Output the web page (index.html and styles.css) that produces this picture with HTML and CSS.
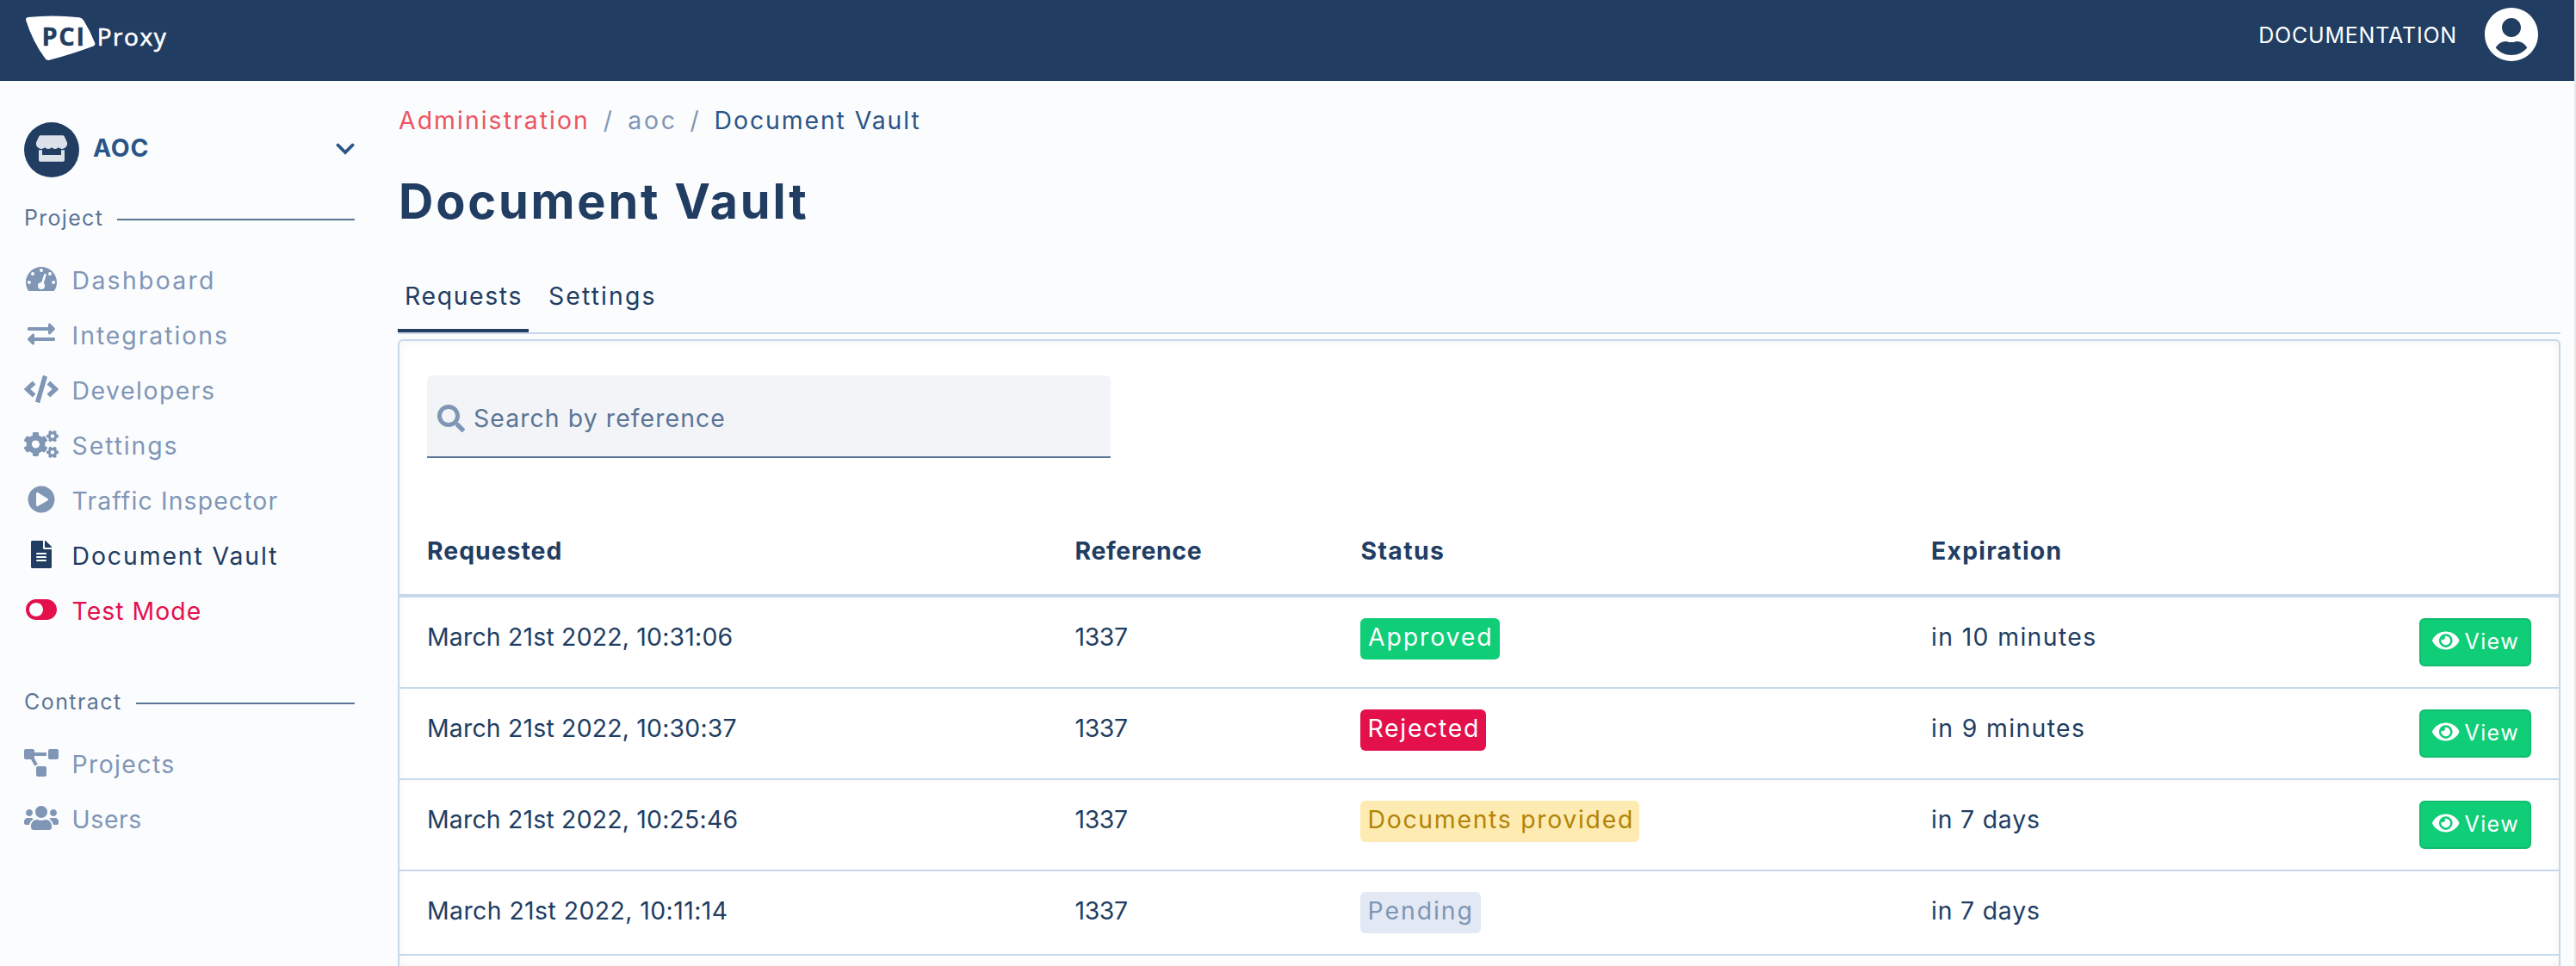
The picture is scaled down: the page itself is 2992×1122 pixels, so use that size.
FILE: index.html
```html
<!DOCTYPE html>
<html lang="en">
<head>
<meta charset="utf-8">
<title>Document Vault</title>
<link rel="stylesheet" href="styles.css">
</head>
<body>
<svg class="defs" width="0" height="0">
  <symbol id="eye" viewBox="0 0 576 512"><path d="M572.52 241.4C518.29 135.59 410.93 64 288 64S57.68 135.64 3.48 241.41a32.35 32.35 0 0 0 0 29.19C57.71 376.41 165.07 448 288 448s230.32-71.64 284.52-177.41a32.35 32.35 0 0 0 0-29.19zM288 400a144 144 0 1 1 144-144 143.93 143.93 0 0 1-144 144zm0-240a95.31 95.31 0 0 0-25.31 3.79 47.85 47.85 0 0 1-66.9 66.9A95.78 95.78 0 1 0 288 160z"/></symbol>
</svg>
<div class="app">
  <header class="topbar">
    <svg class="logo" width="200" height="94" viewBox="0 0 200 94">
      <path fill="#fff" d="M32.500 20 Q61 16.800 92 20.200 Q95 20.600 97 23.500 Q105 36 110.300 50 Q111 52.500 108 53.700 Q86 62 57.500 69.800 Q54.500 70.600 52.500 68 Q38 48.500 30.300 24 Q29.300 20.600 32.500 20Z"/>
      <text class="logo-pci" x="48.500" y="53">PCI</text>
      <text class="logo-proxy" x="112.700" y="53">Proxy</text>
    </svg>
    <div class="topbar-right">
      <a class="docs">DOCUMENTATION</a>
      <svg class="avatar" width="62" height="62" viewBox="0 8 496 496"><path fill="#fff" d="M248 8C111 8 0 119 0 256s111 248 248 248 248-111 248-248S385 8 248 8zm0 96c48.600 0 88 39.400 88 88s-39.400 88-88 88-88-39.400-88-88 39.400-88 88-88zm0 344c-58.700 0-111.300-26.600-146.500-68.200 18.800-35.400 55.600-59.800 98.500-59.800 2.400 0 4.800.4 7.100 1.100 13 4.200 26.600 6.900 40.900 6.900 14.300 0 28-2.700 40.900-6.900 2.300-.7 4.700-1.100 7.100-1.100 42.900 0 79.700 24.400 98.500 59.800C359.300 421.400 306.700 448 248 448z"/></svg>
    </div>
  </header>
  <div class="body">
    <aside class="sidebar">
      <div class="project">
        <svg width="64" height="64" viewBox="0 0 64 64">
          <circle cx="32" cy="32" r="32" fill="#213d62"/>
          <g fill="#dde1ea">
            <path d="M19 15.300H45Q46 15.300 46.600 16.300L49.600 22.500Q51 26 48.700 28.800Q46.500 31.200 43.500 30.900Q41.200 30.700 40 29.300Q38.300 30.900 36 30.900Q33.500 30.900 32 29.300Q30.500 30.900 28 30.900Q25.700 30.900 24 29.300Q22.800 30.700 20.500 30.900Q17.500 31.200 15.300 28.800Q13 26 14.400 22.500L17.400 16.300Q18 15.300 19 15.300Z"/>
            <path d="M17 32.300H21V38H43V32.300H47V44Q47 45.800 45.200 45.800H18.800Q17 45.800 17 44Z"/>
          </g>
        </svg>
        <span class="project-name">AOC</span>
        <svg class="chevron" width="22" height="16" viewBox="0 0 22 16"><path d="M2.500 3.500 11 12 19.500 3.500" fill="none" stroke="#2a5587" stroke-width="3.800" stroke-linecap="round"/></svg>
      </div>

      <div class="section"><span class="t-project">Project</span><i></i></div>
      <nav class="nav">
        <a class="t-dashboard"><svg viewBox="0 0 640 512"><g transform="translate(32 0)"><path d="M288 32C128.940 32 0 160.940 0 320c0 52.800 14.250 102.260 39.060 144.800 5.610 9.620 16.300 15.200 27.440 15.200h443c11.140 0 21.830-5.580 27.440-15.200C561.750 422.260 576 372.800 576 320c0-159.060-128.940-288-288-288z"/><g class="cut"><circle cx="288" cy="94" r="32"/><circle cx="128" cy="160" r="32"/><circle cx="448" cy="160" r="32"/><circle cx="62" cy="320" r="32"/><circle cx="514" cy="320" r="32"/><circle cx="288" cy="384" r="64"/></g><path class="needle" d="M357 182 298 370"/></g></svg>Dashboard</a>
        <a class="t-integrations"><svg viewBox="-64 0 640 512"><path d="M0 168v-16c0-13.255 10.745-24 24-24h360V80c0-21.367 25.899-32.042 40.971-16.971l80 80c9.372 9.373 9.372 24.569 0 33.941l-80 80C409.956 271.982 384 261.456 384 240v-48H24c-13.255 0-24-10.745-24-24zm488 152H128v-48c0-21.314-25.862-32.080-40.971-16.971l-80 80c-9.372 9.373-9.372 24.569 0 33.941l80 80C102.057 463.997 128 453.437 128 432v-48h360c13.255 0 24-10.745 24-24v-16c0-13.255-10.745-24-24-24z"/></svg>Integrations</a>
        <a class="t-developers"><svg viewBox="0 0 640 512"><path d="M278.900 511.500l-61-17.700c-6.400-1.800-10-8.500-8.200-14.900L346.200 8.700c1.800-6.400 8.500-10 14.900-8.200l61 17.700c6.400 1.800 10 8.500 8.200 14.900L293.800 503.300c-1.900 6.400-8.500 10.100-14.900 8.200zm-114-112.200l43.500-46.400c4.600-4.900 4.300-12.700-.8-17.200L117 256l90.600-79.700c5.100-4.500 5.500-12.300.8-17.200l-43.500-46.400c-4.500-4.800-12.100-5.100-17-.5L3.800 247.200c-5.100 4.700-5.100 12.800 0 17.500l144.100 135.100c4.900 4.600 12.500 4.400 17-.5zm327.200.6l144.100-135.100c5.100-4.700 5.100-12.800 0-17.500L492.100 112.100c-4.800-4.500-12.400-4.300-17 .5L431.600 159c-4.600 4.900-4.300 12.700.8 17.200L523 256l-90.600 79.700c-5.100 4.500-5.500 12.300-.8 17.200l43.500 46.400c4.500 4.900 12.100 5.100 17 .6z"/></svg>Developers</a>
        <a class="t-settings"><svg viewBox="0 0 640 512"><path id="gear" d="M512.100 191l-8.200 14.300c-3 5.300-9.400 7.500-15.100 5.400-11.800-4.400-22.600-10.700-32.100-18.600-4.600-3.800-5.800-10.500-2.800-15.700l8.200-14.300c-6.900-8-12.300-17.300-15.900-27.400h-16.500c-6 0-11.200-4.300-12.200-10.300-2-12-2.100-24.600 0-37.100 1-6 6.200-10.400 12.200-10.400h16.500c3.600-10.100 9-19.400 15.900-27.400l-8.200-14.300c-3-5.200-1.900-11.900 2.800-15.700 9.500-7.900 20.400-14.200 32.100-18.600 5.700-2.100 12.100.1 15.100 5.400l8.200 14.300c10.500-1.900 21.200-1.900 31.700 0L552 6.300c3-5.300 9.400-7.500 15.100-5.400 11.800 4.400 22.600 10.700 32.100 18.600 4.600 3.800 5.800 10.500 2.800 15.700l-8.200 14.300c6.900 8 12.300 17.300 15.900 27.400h16.500c6 0 11.200 4.300 12.200 10.300 2 12 2.100 24.600 0 37.100-1 6-6.200 10.400-12.200 10.400h-16.500c-3.600 10.100-9 19.400-15.900 27.400l8.200 14.300c3 5.200 1.900 11.900-2.800 15.700-9.500 7.900-20.400 14.200-32.100 18.600-5.700 2.100-12.100-.1-15.100-5.400l-8.200-14.300c-10.400 1.900-21.200 1.900-31.700 0zm-10.500-58.800c38.500 29.600 82.400-14.300 52.800-52.800-38.500-29.700-82.400 14.300-52.800 52.800z"/><use href="#gear" y="299"/><path d="M386.300 286.100l33.700 16.800c10.100 5.800 14.500 18.100 10.500 29.100-8.900 24.200-26.400 46.400-42.600 65.800-7.400 8.900-20.200 11.100-30.300 5.300l-29.100-16.800c-16 13.700-34.600 24.600-54.900 31.700v33.600c0 11.600-8.300 21.600-19.700 23.600-24.600 4.200-50.400 4.400-75.900 0-11.500-2-20-11.900-20-23.600V418c-20.300-7.200-38.900-18-54.900-31.700L74 403c-10 5.800-22.900 3.600-30.300-5.300-16.200-19.400-33.300-41.600-42.200-65.700-4-10.900.4-23.200 10.500-29.100l33.300-16.800c-3.900-20.900-3.900-42.400 0-63.400L12 205.800c-10.100-5.800-14.600-18.100-10.500-29 8.900-24.200 26-46.400 42.200-65.800 7.400-8.900 20.200-11.100 30.300-5.300l29.100 16.800c16-13.700 34.600-24.600 54.900-31.700V57.100c0-11.500 8.200-21.500 19.600-23.500 24.600-4.200 50.500-4.400 76-.1 11.500 2 20 11.900 20 23.600v33.600c20.300 7.200 38.900 18 54.900 31.700l29.100-16.800c10-5.800 22.900-3.600 30.300 5.300 16.200 19.400 33.200 41.600 42.100 65.800 4 10.900.1 23.200-10 29.100l-33.700 16.800c3.900 21 3.900 42.500 0 63.500zm-117.600 21.100c59.200-77-28.700-164.900-105.700-105.700-59.200 77 28.700 164.900 105.700 105.700z"/></svg>Settings</a>
        <a class="t-traffic"><svg viewBox="-64 0 640 512"><path d="M256 8C119 8 8 119 8 256s111 248 248 248 248-111 248-248S393 8 256 8zm115.700 272l-176 101c-15.800 8.800-35.700-2.500-35.700-21V152c0-18.400 19.800-29.800 35.700-21l176 107c16.400 9.200 16.400 32.900 0 42z"/></svg>Traffic Inspector</a>
        <a class="t-vault active"><svg viewBox="-128 0 640 512"><path d="M224 136V0H24C10.700 0 0 10.700 0 24v464c0 13.300 10.700 24 24 24h336c13.300 0 24-10.700 24-24V160H248c-13.200 0-24-10.800-24-24zm64 236c0 6.600-5.400 12-12 12H108c-6.600 0-12-5.400-12-12v-8c0-6.600 5.400-12 12-12h168c6.600 0 12 5.400 12 12v8zm0-64c0 6.600-5.400 12-12 12H108c-6.600 0-12-5.400-12-12v-8c0-6.600 5.400-12 12-12h168c6.600 0 12 5.400 12 12v8zm0-72v8c0 6.600-5.400 12-12 12H108c-6.600 0-12-5.400-12-12v-8c0-6.600 5.400-12 12-12h168c6.600 0 12 5.400 12 12zm96-114.100v6.100H256V0h6.100c6.400 0 12.500 2.500 17 7l97.900 98c4.500 4.500 7 10.600 7 16.900z"/></svg>Document Vault</a>
        <a class="t-test danger"><svg viewBox="-32 0 640 512"><path d="M384 64H192C85.961 64 0 149.961 0 256s85.961 192 192 192h192c106.039 0 192-85.961 192-192S490.039 64 384 64zM192 384c-70.741 0-128-57.249-128-128s57.249-128 128-128 128 57.249 128 128-57.249 128-128 128z"/></svg>Test Mode</a>
      </nav>

      <div class="section section-contract"><span class="t-contract">Contract</span><i></i></div>
      <nav class="nav">
        <a class="t-projects"><svg viewBox="0 0 640 512"><path d="M384 320H256c-17.670 0-32 14.330-32 32v128c0 17.670 14.330 32 32 32h128c17.670 0 32-14.330 32-32V352c0-17.670-14.330-32-32-32zM192 32c0-17.670-14.330-32-32-32H32C14.330 0 0 14.330 0 32v128c0 17.670 14.330 32 32 32h95.720l73.160 128.040C211.980 300.980 232.400 288 256 288h.280L192 175.510V128h224V64H192V32zM608 0H480c-17.670 0-32 14.330-32 32v128c0 17.670 14.330 32 32 32h128c17.670 0 32-14.330 32-32V32c0-17.670-14.330-32-32-32z"/></svg>Projects</a>
        <a class="t-users"><svg viewBox="0 0 640 512"><path d="M96 224c35.300 0 64-28.700 64-64s-28.700-64-64-64-64 28.700-64 64 28.700 64 64 64zm448 0c35.300 0 64-28.700 64-64s-28.700-64-64-64-64 28.700-64 64 28.700 64 64 64zm32 32h-64c-17.600 0-33.500 7.100-45.100 18.600 40.300 22.100 68.900 62 75.100 109.400h66c17.700 0 32-14.300 32-32v-32c0-35.300-28.700-64-64-64zm-256 0c61.900 0 112-50.100 112-112S381.900 32 320 32 208 82.100 208 144s50.100 112 112 112zm76.800 32h-8.300c-20.800 10-43.900 16-68.500 16s-47.600-6-68.500-16h-8.300C179.600 288 128 339.600 128 403.200V432c0 26.500 21.500 48 48 48h288c26.500 0 48-21.500 48-48v-28.800c0-63.600-51.600-115.200-115.200-115.200zm-223.700-13.400C161.500 263.100 145.600 256 128 256H64c-35.300 0-64 28.700-64 64v32c0 17.700 14.300 32 32 32h65.900c6.300-47.400 34.900-87.300 75.200-109.400z"/></svg>Users</a>
      </nav>
    </aside>

    <main class="main">
      <div class="crumbs"><a class="crumb-admin">Administration</a><span class="sep">/</span><span class="crumb-aoc">aoc</span><span class="sep">/</span><span class="crumb-page">Document Vault</span></div>
      <h1>Document Vault</h1>
      <div class="tabs"><a class="tab tab-requests active">Requests</a><a class="tab tab-settings">Settings</a></div>
      <section class="panel">
        <div class="search">
          <svg width="32" height="32" viewBox="0 0 512 512"><path d="M505 442.700L405.300 343c-4.500-4.500-10.600-7-17-7H372c27.600-35.300 44-79.700 44-128C416 93.100 322.900 0 208 0S0 93.100 0 208s93.100 208 208 208c48.300 0 92.700-16.400 128-44v16.300c0 6.400 2.500 12.500 7 17l99.700 99.700c9.400 9.400 24.600 9.400 33.900 0l28.300-28.300c9.400-9.400 9.400-24.600.1-34zM208 336c-70.700 0-128-57.200-128-128 0-70.700 57.200-128 128-128 70.700 0 128 57.200 128 128 0 70.700-57.200 128-128 128z"/></svg>
          <span>Search by reference</span>
        </div>
        <div class="row head"><span class="h-requested">Requested</span><span class="h-reference">Reference</span><span class="h-status">Status</span><span class="h-expiration">Expiration</span></div>
        <div class="row"><span class="date">March 21st 2022, 10:31:06</span><span class="ref">1337</span><span><b class="badge approved">Approved</b></span><span class="exp">in 10 minutes</span><a class="view"><svg><use href="#eye"/></svg>View</a></div>
        <div class="row"><span class="date">March 21st 2022, 10:30:37</span><span class="ref">1337</span><span><b class="badge rejected">Rejected</b></span><span class="exp">in 9 minutes</span><a class="view"><svg><use href="#eye"/></svg>View</a></div>
        <div class="row"><span class="date">March 21st 2022, 10:25:46</span><span class="ref">1337</span><span><b class="badge provided">Documents provided</b></span><span class="exp exp-days">in 7 days</span><a class="view"><svg><use href="#eye"/></svg>View</a></div>
        <div class="row"><span class="date date-narrow">March 21st 2022, 10:11:14</span><span class="ref">1337</span><span><b class="badge pending">Pending</b></span><span class="exp exp-days">in 7 days</span></div>
      </section>
    </main>
  </div>
</div>
</body>
</html>
```
FILE: styles.css
```css
* { box-sizing: border-box; }
body {
  margin: 0;
  background: #fbfcfe;
  color: #213d62;
  font: 28.4px/32px Inter, "Liberation Sans", sans-serif;
  white-space: nowrap;
}
.defs { display: block; }
.app {
  height: 1122px;
  overflow: hidden;
  display: flex;
  flex-direction: column;
  border-right: 2px solid #e8e8e8;
}

/* Top bar */
.topbar {
  height: 94px;
  flex: none;
  display: flex;
  justify-content: space-between;
  background: #213d62;
  color: #fff;
}
.logo { display: block; font-family: "Open Sans", "Noto Sans", sans-serif; }
.logo-pci { font-size: 29px; font-weight: 700; fill: #213d62; letter-spacing: 1.6px; stroke: #213d62; stroke-width: .4px; }
.logo-proxy { font-size: 28px; fill: #fff; letter-spacing: 1.55px; stroke: #fff; stroke-width: .6px; }
.topbar-right { display: flex; height: 80px; align-items: center; padding-right: 42px; }
.docs { font-size: 25px; letter-spacing: .8px; padding-top: 2px; margin-right: 32px; }

.body { flex: 1; min-height: 0; display: flex; }

/* Sidebar */
.sidebar { width: 462px; flex: none; padding: 48px 50px 0 28px; }
.project { display: flex; align-items: center; height: 64px; }
.project-name {
  margin: 0 auto 5px 16px;
  font-weight: 700;
  letter-spacing: .8px;
  color: #2a5587;
}
.chevron { margin-right: 0; margin-bottom: 3px; }
.section {
  display: flex;
  align-items: center;
  gap: 16px;
  height: 40px;
  margin: 29px 0 17px;
  color: #5b7595;
  font-size: 25px;
}
.section span { padding-bottom: 4px; }
.section i { flex: 1; height: 2px; background: #5b7595; }
.section-contract { margin-top: 57px; }
.nav a {
  display: flex;
  align-items: center;
  height: 64px;
  color: #8096b5;
  line-height: 60px;
  padding-top: 3px;
}
.nav svg { width: 40px; height: 32px; margin: -3px 15.6px 0 0; fill: currentColor; flex: none; }
.nav a.active { color: #213d62; }
.nav a.danger { color: #e3104c; }
.nav .cut { fill: #fbfcfe; }
.nav .needle { stroke: #fbfcfe; stroke-width: 42px; stroke-linecap: round; fill: none; }
.t-project { letter-spacing: 1.3px; }
.t-contract { letter-spacing: 1.45px; }
.t-dashboard { letter-spacing: 2.3px; }
.t-integrations { letter-spacing: 1.95px; }
.t-developers { letter-spacing: 1.5px; }
.t-settings { letter-spacing: 1.89px; }
.t-traffic { letter-spacing: 1.12px; }
.t-vault { letter-spacing: 1.88px; }
.t-test { letter-spacing: 1.02px; }
.t-projects { letter-spacing: 1.38px; }
.t-users { letter-spacing: .6px; }

/* Main column */
.main { flex: 1; padding: 26px 16px 0 0; display: flex; flex-direction: column; }
.crumbs { display: flex; height: 40px; line-height: 40px; color: #8096b5; }
.crumb-admin { padding-left: 1px; color: #eb5561; letter-spacing: 2.04px; }
.crumb-aoc { letter-spacing: 2.7px; }
.crumb-page { color: #2a5587; letter-spacing: 1.9px; }
.sep { width: 11px; margin: 0 17.5px 0 16px; }
.crumb-aoc + .sep { margin: 0 17px 0 15px; }
h1 {
  margin: 39px 0 37px;
  height: 70px;
  padding-left: 1px;
  font-size: 55.9px;
  line-height: 70px;
  font-weight: 700;
  letter-spacing: 2.8px;
}
.tabs { display: flex; height: 82px; flex: none; border-bottom: 2px solid #c7d8eb; }
.tab { height: 80px; line-height: 76px; padding: 0 8px; border-bottom: 4px solid transparent; }
.tab-requests { width: 152px; letter-spacing: 1.62px; }
.tab-settings { margin-left: 15px; letter-spacing: 2.11px; }
.tab.active { border-color: #213d62; }

.panel {
  flex: 1;
  margin-top: 6px;
  background: #fff;
  border: 2px solid #c7d8eb;
  border-bottom: 0;
  border-radius: 6px 6px 0 0;
  box-shadow: inset 0 0 12px rgba(0, 0, 0, .05);
}
.search {
  display: flex;
  align-items: center;
  width: 794px;
  height: 96px;
  margin: 40px 0 58px 32px;
  padding: 5px 12px 0;
  gap: 10px;
  background: #f2f4f8;
  border-bottom: 2px solid #5b7595;
  border-radius: 6px 6px 0 0;
  color: #5b7595;
  letter-spacing: 1.09px;
}
.search svg { fill: #8096b5; }

/* Requests table */
.row {
  display: grid;
  grid-template-columns: 752px 332px 663px 1fr auto;
  align-items: start;
  height: 106px;
  padding: 24px 32px 0;
  border-bottom: 2px solid #c7d8eb;
  line-height: 43.5px;
}
.row:last-child { height: 98px; }
.row.head { height: 104px; padding-top: 0; line-height: 100px; border-bottom-width: 4px; font-weight: 700; }
.h-requested { letter-spacing: .98px; }
.h-reference { letter-spacing: .65px; padding-left: .5px; }
.h-status { letter-spacing: 1.36px; padding-left: .5px; }
.h-expiration { letter-spacing: 1.22px; }
.date { letter-spacing: .2px; }
.date-narrow { letter-spacing: .43px; }
.ref { letter-spacing: -.4px; padding-left: .5px; }
.exp { letter-spacing: 1.35px; }
.exp-days { letter-spacing: .8px; }
.badge { display: block; width: max-content; height: 48px; padding: 0 8px 0 8.5px; border-radius: 6px; font-weight: 400; }
.approved { width: 162px; padding-left: 9px; background: #10cd78; color: #fff; letter-spacing: 1.9px; }
.rejected { width: 146px; background: #e3104c; color: #fff; letter-spacing: 1.7px; }
.provided { width: 324px; background: #fdebb2; color: #b28406; letter-spacing: 1.7px; }
.pending { width: 140px; background: #e2e9f4; color: #8096b5; letter-spacing: 1.95px; }
.view {
  display: flex;
  align-items: center;
  width: 130px;
  height: 56px;
  padding-left: 13px;
  border: 2px solid #0fbd6d;
  border-radius: 6px;
  background: #10cd78;
  color: #fff;
  font-size: 25px;
  letter-spacing: 1.4px;
}
.view svg { width: 31.5px; height: 28px; margin: -5px 6px 0 0; fill: #fff; }
```
